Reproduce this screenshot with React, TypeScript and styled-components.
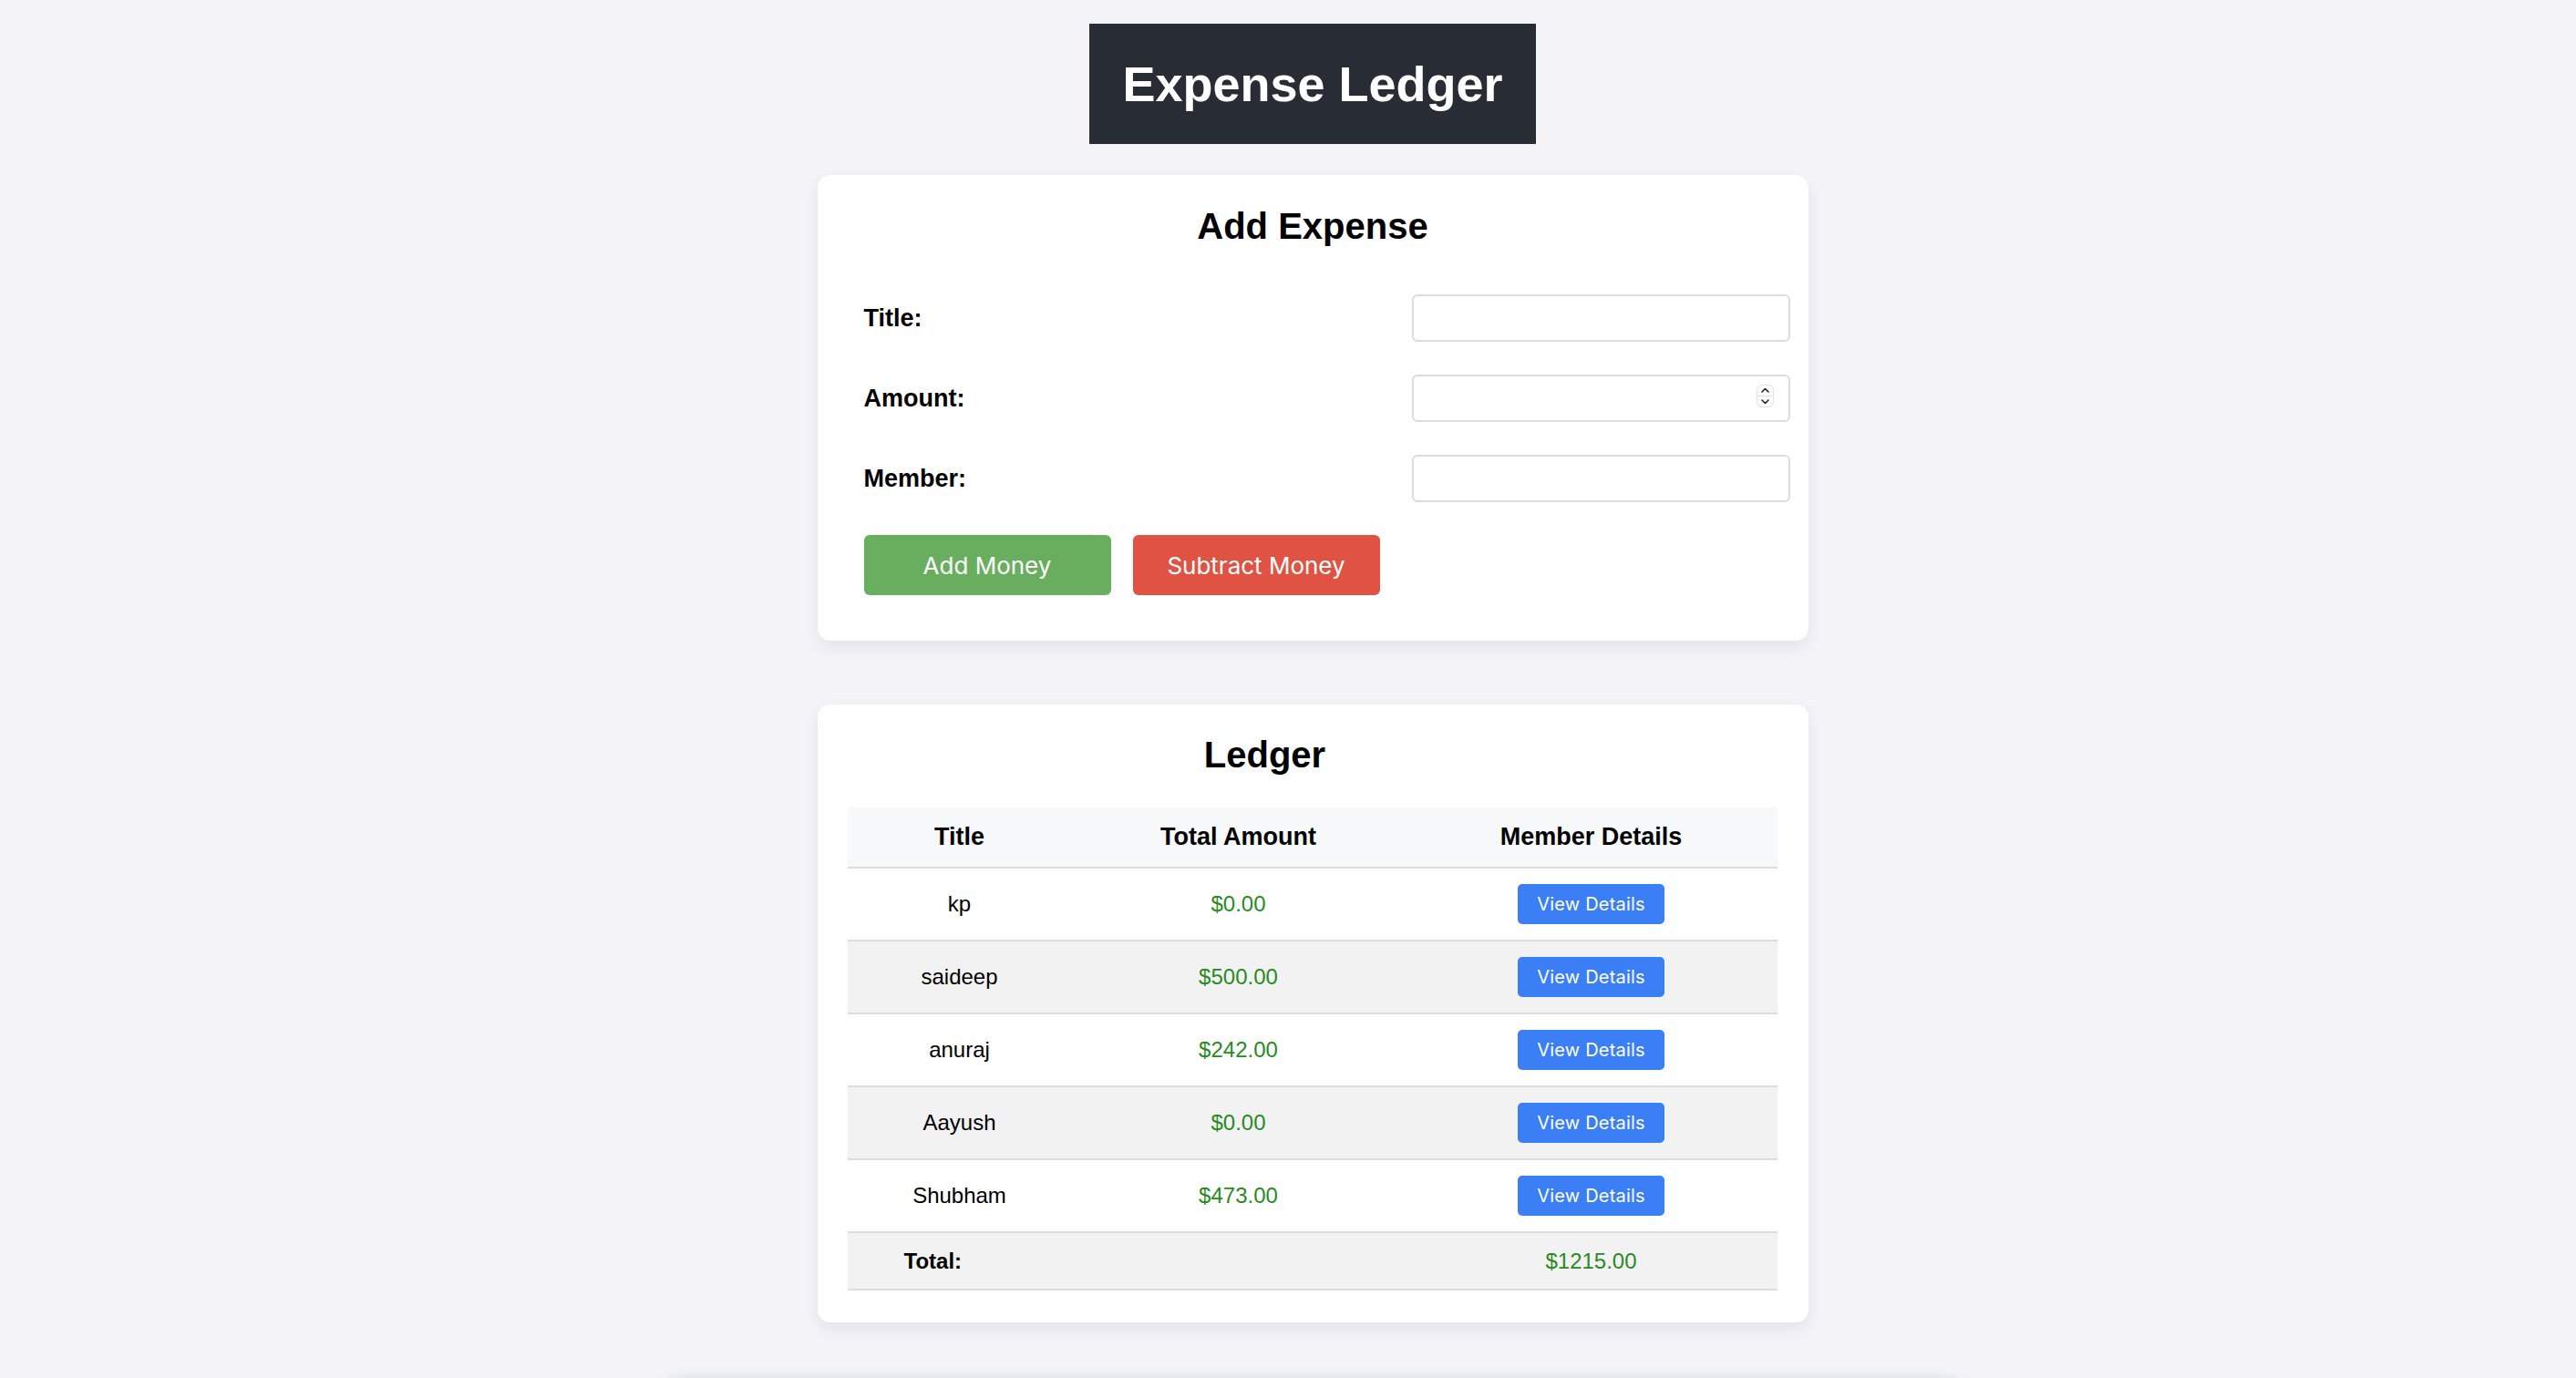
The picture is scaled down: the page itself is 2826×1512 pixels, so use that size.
import React from "react";
import styled, { createGlobalStyle } from "styled-components";

const GlobalStyle = createGlobalStyle`
  html, body {
    margin: 0;
    padding: 0;
    background: #f3f3f8;
    font-family: "Liberation Sans", Arial, sans-serif;
    color: #000;
  }
  * { box-sizing: border-box; }
`;

const Page = styled.div`
  display: flex;
  flex-direction: column;
  align-items: center;
  padding-top: 26px;
  padding-left: 54px;
  min-height: 1512px;
`;

const Header = styled.h1`
  margin: 0 0 34px;
  background: #282c34;
  color: #fff;
  font-size: 54px;
  line-height: 60px;
  font-weight: 700;
  padding: 36px 36px;
`;

const Card = styled.section<{ $pad: string; $gap?: number }>`
  width: 1087px;
  background: #fff;
  border-radius: 14px;
  box-shadow: 0 7px 18px rgba(20, 20, 60, 0.07);
  padding: ${(p) => p.$pad};
  margin-bottom: ${(p) => p.$gap ?? 0}px;
`;

const CardTitle = styled.h2<{ $shift?: number; $mb: number }>`
  margin: 0 0 ${(p) => p.$mb}px;
  font-size: 40px;
  line-height: 46px;
  font-weight: 700;
  text-align: center;
  padding-right: ${(p) => p.$shift ?? 0}px;
`;

const Form = styled.div`
  display: flex;
  flex-direction: column;
  gap: 36px;
`;

const FormRow = styled.div`
  display: flex;
  align-items: center;
  justify-content: space-between;
  padding-left: 31px;
`;

const Label = styled.label`
  font-size: 27px;
  font-weight: 700;
`;

const InputWrap = styled.div`
  position: relative;
  width: 415px;
  height: 52px;
`;

const Input = styled.input`
  width: 100%;
  height: 100%;
  border: 2px solid #dcdcdc;
  border-radius: 6px;
  background: #fff;
  font-size: 24px;
  padding: 0 14px;
  outline: none;
  -moz-appearance: textfield;
  &::-webkit-outer-spin-button,
  &::-webkit-inner-spin-button {
    -webkit-appearance: none;
    margin: 0;
  }
`;

const Spinner = styled.div`
  position: absolute;
  right: 18px;
  top: 11px;
  width: 19px;
  height: 25px;
  border: 1px solid #e2e2e2;
  border-radius: 6px;
  background: #fff;
  display: flex;
  flex-direction: column;
  align-items: center;
  justify-content: space-between;
  padding: 2px 0;
`;

const SpinDivider = styled.div`
  width: 100%;
  height: 1px;
  background: #e2e2e2;
`;

const ButtonRow = styled.div`
  display: flex;
  gap: 24px;
  padding-left: 31px;
`;

const ActionButton = styled.button<{ $color: string }>`
  width: 271px;
  height: 66px;
  border: none;
  border-radius: 6px;
  background: ${(p) => p.$color};
  color: #fff;
  font-family: Inter, "Noto Sans", sans-serif;
  font-size: 26px;
  font-weight: 400;
  cursor: pointer;
`;

const Table = styled.table`
  width: 1020px;
  border-collapse: collapse;
  table-layout: fixed;
`;

const HeadCell = styled.th`
  height: 66px;
  background: #f7f8fa;
  border-bottom: 2px solid #ddd;
  font-size: 27px;
  font-weight: 700;
  text-align: center;
  padding: 0;
`;

const Row = styled.tr<{ $alt?: boolean }>`
  background: ${(p) => (p.$alt ? "#f2f2f2" : "#fff")};
`;

const Cell = styled.td<{ $h: number; $green?: boolean; $bold?: boolean; $left?: boolean }>`
  height: ${(p) => p.$h}px;
  border-bottom: 2px solid #ddd;
  text-align: ${(p) => (p.$left ? "left" : "center")};
  padding: ${(p) => (p.$left ? "0 0 0 62px" : "0")};
  font-size: 24px;
  font-weight: ${(p) => (p.$bold ? 700 : 400)};
  color: ${(p) => (p.$green ? "#2a8a24" : "#000")};
`;

const DetailsButton = styled.button`
  width: 161px;
  height: 44px;
  border: none;
  border-radius: 5px;
  background: #3b7ff6;
  color: #fff;
  font-family: Inter, "Noto Sans", sans-serif;
  font-size: 20px;
  letter-spacing: 0.2px;
  vertical-align: middle;
  cursor: pointer;
`;

const BelowFold = styled.div`
  width: 1423px;
  height: 200px;
  margin-top: 64px;
  background: #f3f3f8;
  border-radius: 14px;
  box-shadow: 0 -4px 14px rgba(20, 20, 60, 0.08);
`;

const Chevron = ({ up }: { up?: boolean }) => (
  <svg width="9" height="6" viewBox="0 0 9 6" fill="none">
    <path
      d={up ? "M1 5 L4.5 1.5 L8 5" : "M1 1 L4.5 4.5 L8 1"}
      stroke="#222"
      strokeWidth="1.6"
      strokeLinecap="round"
      strokeLinejoin="round"
    />
  </svg>
);

const entries = [
  { title: "kp", amount: 0 },
  { title: "saideep", amount: 500 },
  { title: "anuraj", amount: 242 },
  { title: "Aayush", amount: 0 },
  { title: "Shubham", amount: 473 },
];

export default function App() {
  const total = entries.reduce((s, e) => s + e.amount, 0);
  return (
    <>
      <GlobalStyle />
      <Page>
        <Header>Expense Ledger</Header>

        <Card $pad="33px 20px 50px 20px" $gap={70}>
          <CardTitle $mb={52}>Add Expense</CardTitle>
          <Form>
            <FormRow>
              <Label>Title:</Label>
              <InputWrap>
                <Input type="text" />
              </InputWrap>
            </FormRow>
            <FormRow>
              <Label>Amount:</Label>
              <InputWrap>
                <Input type="number" />
                <Spinner>
                  <Chevron up />
                  <SpinDivider />
                  <Chevron />
                </Spinner>
              </InputWrap>
            </FormRow>
            <FormRow>
              <Label>Member:</Label>
              <InputWrap>
                <Input type="text" />
              </InputWrap>
            </FormRow>
            <ButtonRow>
              <ActionButton $color="#69ae5f">Add Money</ActionButton>
              <ActionButton $color="#e05343">Subtract Money</ActionButton>
            </ButtonRow>
          </Form>
        </Card>

        <Card $pad="32px 34px 35px 33px">
          <CardTitle $mb={35} $shift={104}>Ledger</CardTitle>
          <Table>
            <colgroup>
              <col style={{ width: 246 }} />
              <col style={{ width: 366 }} />
              <col style={{ width: 408 }} />
            </colgroup>
            <thead>
              <tr>
                <HeadCell>Title</HeadCell>
                <HeadCell>Total Amount</HeadCell>
                <HeadCell>Member Details</HeadCell>
              </tr>
            </thead>
            <tbody>
              {entries.map((e, i) => (
                <Row key={e.title} $alt={i % 2 === 1}>
                  <Cell $h={80}>{e.title}</Cell>
                  <Cell $h={80} $green>
                    ${e.amount.toFixed(2)}
                  </Cell>
                  <Cell $h={80}>
                    <DetailsButton>View Details</DetailsButton>
                  </Cell>
                </Row>
              ))}
              <Row $alt>
                <Cell $h={63} $bold $left>
                  Total:
                </Cell>
                <Cell $h={63}></Cell>
                <Cell $h={63} $green>
                  ${total.toFixed(2)}
                </Cell>
              </Row>
            </tbody>
          </Table>
        </Card>

        <BelowFold />
      </Page>
    </>
  );
}
